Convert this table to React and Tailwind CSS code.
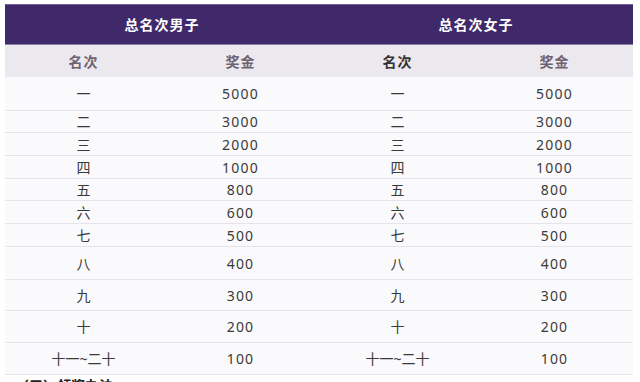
import React from "react";

const rows = [
  ["一", "5000", "h-[33px]"],
  ["二", "3000", "h-[22px]"],
  ["三", "2000", "h-[23px]"],
  ["四", "1000", "h-[23px]"],
  ["五", "800", "h-[22px]"],
  ["六", "600", "h-[23px]"],
  ["七", "500", "h-[23px]"],
  ["八", "400", "h-[33px]"],
  ["九", "300", "h-[31px]"],
  ["十", "200", "h-[32px]"],
  ["十一~二十", "100", "h-[32px]"],
];

export default function App() {
  return (
    <div
      className="w-[640px] h-[382px] overflow-hidden bg-white pt-[4px] pl-[5px]"
      style={{ fontFamily: '"Noto Sans", "Noto Sans CJK SC", sans-serif' }}
    >
      <div className="w-[628px]">
        <div className="grid grid-cols-2 h-[41px] bg-[#40296b] border-t border-[#6f5f92] border-b border-b-[#8a7fa3] text-white text-[14px] font-bold">
          <div className="flex items-center justify-center tracking-[1px]">总名次男子</div>
          <div className="flex items-center justify-center tracking-[1px]">总名次女子</div>
        </div>
        <div className="grid grid-cols-4 h-[32px] bg-[#ebe8ee] text-[14px] font-semibold">
          <div className="flex items-center justify-center text-[#6e6270] tracking-[1px]">名次</div>
          <div className="flex items-center justify-center text-[#6e6270] tracking-[1px]">奖金</div>
          <div className="flex items-center justify-center text-[#333333] tracking-[1px]">名次</div>
          <div className="flex items-center justify-center text-[#6e6270] tracking-[1px]">奖金</div>
        </div>
        {rows.map(([r, p, h], i) => (
          <div
            key={i}
            className={`grid grid-cols-4 ${h} bg-[#faf9fb] text-[14px] text-[#3a3a3a] ${i > 0 ? "border-t border-[#e6e4ea]" : ""}`}
          >
            <div className="flex items-center justify-center">{r}</div>
            <div className="flex items-center justify-center tracking-[1.2px]">{p}</div>
            <div className="flex items-center justify-center">{r}</div>
            <div className="flex items-center justify-center tracking-[1.2px]">{p}</div>
          </div>
        ))}
        <div className="border-t border-[#e6e4ea]" />
      </div>
      <div className="pl-[10px] pt-[1px] text-[14px] font-bold text-[#222] leading-[20px]">（三）领奖办法</div>
    </div>
  );
}
